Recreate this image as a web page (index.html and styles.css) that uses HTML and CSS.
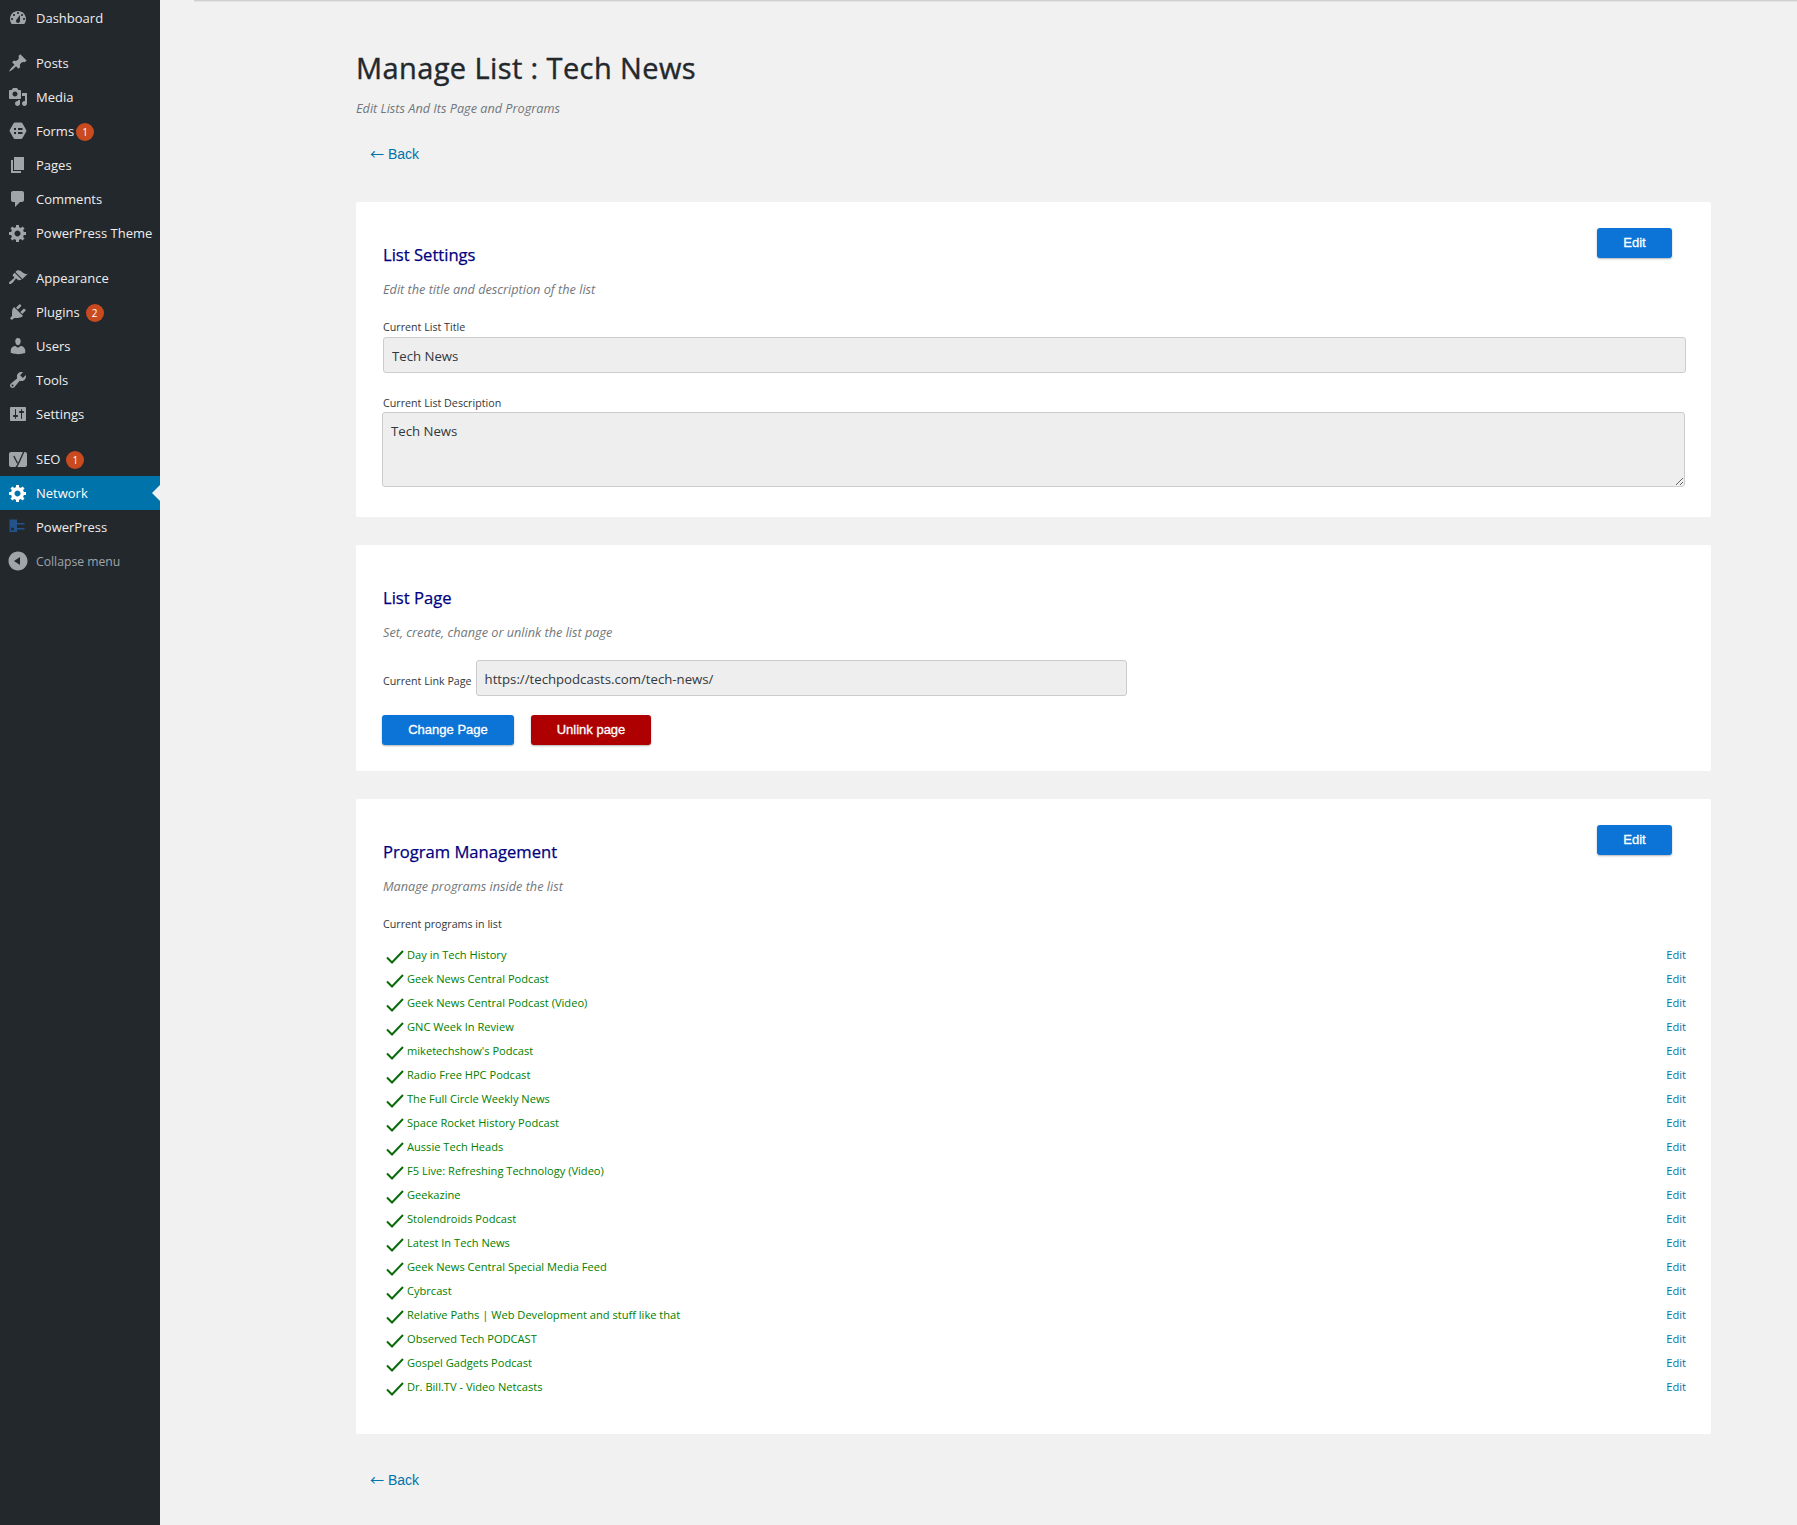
FILE: index.html
```html
<!DOCTYPE html>
<html lang="en">
<head>
    <meta charset="UTF-8">
    <title>Manage List : Tech News</title>
    <link rel="stylesheet" href="styles.css">
</head>
<body>
    <aside class="sidebar">
        <ul class="menu">
            <li class="menu-item"><svg class="menu-icon" viewBox="0 0 20 20"><path d="M3.76 16h12.48c1.1-1.37 1.76-3.11 1.76-5 0-4.42-3.58-8-8-8s-8 3.58-8 8c0 1.89.66 3.63 1.76 5zM10 4c.55 0 1 .45 1 1s-.45 1-1 1-1-.45-1-1 .45-1 1-1zM6 6c.55 0 1 .45 1 1s-.45 1-1 1-1-.45-1-1 .45-1 1-1zm8 0c.55 0 1 .45 1 1s-.45 1-1 1-1-.45-1-1 .45-1 1-1zm-5.37 5.55L12 7v6c0 1.1-.9 2-2 2s-2-.9-2-2c0-.57.24-1.08.63-1.45zM4 10c.55 0 1 .45 1 1s-.45 1-1 1-1-.45-1-1 .45-1 1-1zm12 0c.55 0 1 .45 1 1s-.45 1-1 1-1-.45-1-1 .45-1 1-1z"/></svg>Dashboard</li>
        </ul>
        <ul class="menu">
            <li class="menu-item"><svg class="menu-icon" viewBox="0 0 20 20"><path d="M10.44 3.02l1.82-1.82 6.36 6.35-1.83 1.82c-1.05-.68-2.48-.57-3.41.36l-.75.75c-.92.93-1.04 2.35-.35 3.41l-1.83 1.82-2.41-2.41-2.8 2.79c-.42.42-3.38 2.71-3.8 2.29s1.86-3.39 2.28-3.81l2.79-2.79L4.1 9.36l1.83-1.82c1.05.69 2.48.57 3.4-.36l.75-.75c.93-.92 1.05-2.35.36-3.41z"/></svg>Posts</li>
            <li class="menu-item"><svg class="menu-icon" viewBox="0 0 20 20"><path d="M13 11V4c0-.55-.45-1-1-1h-1.67L9 1H5L3.67 3H2c-.55 0-1 .45-1 1v7c0 .55.45 1 1 1h10c.55 0 1-.45 1-1zM7 4.5c1.38 0 2.5 1.12 2.5 2.5S8.38 9.5 7 9.5 4.5 8.38 4.5 7 5.62 4.5 7 4.5zM14 6h5v10.5c0 1.38-1.12 2.5-2.5 2.5S14 17.88 14 16.5s1.12-2.5 2.5-2.5c.17 0 .34.02.5.05V9h-3V6zm-4 8.05V13h2v3.5c0 1.38-1.12 2.5-2.5 2.5S7 17.88 7 16.5 8.12 14 9.5 14c.17 0 .34.02.5.05z"/></svg>Media</li>
            <li class="menu-item"><svg class="menu-icon" viewBox="0 0 20 20"><path fill-rule="evenodd" d="M7 1.500h6c.6 0 1.100.3 1.400.8l3.800 6.700c.3.5.3 1.100 0 1.600l-3.800 6.600c-.3.5-.8.8-1.400.8H7c-.6 0-1.100-.3-1.400-.8l-3.800-6.600c-.3-.5-.3-1.100 0-1.600l3.800-6.700c.3-.5.8-.8 1.400-.8zM6 7v2h2V7zm4 0v2h4.500V7zm-4 4v2h2v-2zm4 0v2h4.500v-2z"/></svg>Forms<span class="badge badge-tight">1</span></li>
            <li class="menu-item"><svg class="menu-icon" viewBox="0 0 20 20"><path d="M6 15V2h10v13H6zm-1 1h8v2H3V5h2v11z"/></svg>Pages</li>
            <li class="menu-item"><svg class="menu-icon" viewBox="0 0 20 20"><path d="M5 2h9c1.100 0 2 .9 2 2v7c0 1.100-.9 2-2 2h-2l-5 5v-5H5c-1.100 0-2-.9-2-2V4c0-1.100.9-2 2-2z"/></svg>Comments</li>
            <li class="menu-item"><svg class="menu-icon" viewBox="0 0 20 20"><path d="M18 12h-2.180c-.17.7-.44 1.350-.81 1.930l1.540 1.540-2.100 2.100-1.540-1.540c-.58.36-1.230.63-1.910.79V19H8v-2.180c-.68-.16-1.330-.43-1.910-.79l-1.540 1.540-2.120-2.120 1.540-1.540c-.36-.58-.63-1.230-.79-1.910H1V9.030h2.170c.16-.7.44-1.350.8-1.940L2.430 5.550l2.100-2.100 1.540 1.540c.58-.37 1.240-.64 1.930-.81V2h3v2.180c.68.16 1.330.43 1.910.79l1.540-1.540 2.120 2.120-1.540 1.540c.36.59.64 1.240.8 1.940H18V12zm-8.500 1.500c1.660 0 3-1.340 3-3s-1.340-3-3-3-3 1.340-3 3 1.340 3 3 3z"/></svg>PowerPress Theme</li>
        </ul>
        <ul class="menu">
            <li class="menu-item"><svg class="menu-icon" viewBox="0 0 20 20"><path d="M14.480 11.060L7.410 3.990l1.500-1.500c.5-.56 2.300-.47 3.510.32 1.210.8 1.430 1.280 2.910 2.100 1.180.64 2.450 1.260 4.450.85zm-.71.71L6.700 4.700 4.930 6.470c-.39.39-.39 1.020 0 1.410l1.060 1.060c.39.39.39 1.030 0 1.420-.6.6-1.430 1.110-2.210 1.690-.35.26-.7.53-1.010.84C1.430 13.230.4 14.890 1.200 15.700l.01.01c.8.8 2.460-.23 3.810-1.570.31-.31.58-.66.84-1.010.58-.78 1.090-1.610 1.690-2.210.39-.39 1.020-.39 1.420 0l1.060 1.060c.39.39 1.020.39 1.410 0z"/></svg>Appearance</li>
            <li class="menu-item"><svg class="menu-icon" viewBox="0 0 20 20"><path d="M13.110 4.360L9.870 7.600 8 5.730l3.240-3.240c.35-.34 1.050-.2 1.560.32.52.51.66 1.210.31 1.550zm-8 1.770l.91-1.120 9.010 9.010-1.190.84c-.71.71-2.630 1.160-3.820 1.160H6.140L4.900 17.260c-.59.59-1.540.59-2.120 0-.59-.58-.59-1.530 0-2.120l1.240-1.240v-3.880c0-1.130.4-3.190 1.090-3.890zm7.260 3.970l3.240-3.240c.34-.35 1.040-.21 1.550.31.52.51.66 1.210.31 1.550l-3.240 3.250z"/></svg>Plugins<span class="badge">2</span></li>
            <li class="menu-item"><svg class="menu-icon" viewBox="0 0 20 20"><path d="M10 9.250c-2.270 0-2.730-3.440-2.730-3.440C7 4.020 7.820 2 9.970 2c2.160 0 2.980 2.020 2.710 3.810 0 0-.41 3.440-2.680 3.440zm0 2.570L12.720 10c2.390 0 4.520 2.330 4.520 4.530v2.490s-3.650 1.130-7.240 1.130c-3.650 0-7.240-1.130-7.240-1.130v-2.490c0-2.250 1.940-4.480 4.470-4.480z"/></svg>Users</li>
            <li class="menu-item"><svg class="menu-icon" viewBox="0 0 20 20"><path d="M16.680 9.770c-1.340 1.340-3.300 1.670-4.950.99l-5.410 6.520c-.99.99-2.590.99-3.580 0s-.99-2.590 0-3.570l6.520-5.420c-.68-1.650-.35-3.610.99-4.950 1.280-1.280 3.120-1.620 4.720-1.060l-2.890 2.890 2.820 2.820 2.860-2.870c.53 1.580.18 3.390-1.080 4.650zM3.810 16.210c.4.39 1.040.39 1.430 0 .4-.4.4-1.040 0-1.430-.39-.4-1.030-.4-1.430 0-.39.39-.39 1.030 0 1.430z"/></svg>Tools</li>
            <li class="menu-item"><svg class="menu-icon" viewBox="0 0 20 20"><path d="M18 16V4c0-.55-.45-1-1-1H3c-.55 0-1 .45-1 1v12c0 .55.45 1 1 1h14c.55 0 1-.45 1-1zM8 11h1c.55 0 1 .45 1 1s-.45 1-1 1H8v1.500c0 .28-.22.5-.5.5s-.5-.22-.5-.5V13H6c-.55 0-1-.45-1-1s.45-1 1-1h1V5.500c0-.28.22-.5.5-.5s.5.22.5.5V11zm5-2h-1c-.55 0-1-.45-1-1s.45-1 1-1h1V5.500c0-.28.22-.5.5-.5s.5.22.5.5V7h1c.55 0 1 .45 1 1s-.45 1-1 1h-1v5.500c0 .28-.22.5-.5.5s-.5-.22-.5-.5V9z"/></svg>Settings</li>
        </ul>
        <ul class="menu">
            <li class="menu-item"><svg class="menu-icon" viewBox="0 0 20 20"><path d="M3 3h14c1.100 0 2 .9 2 2v11c0 1.100-.9 2-2 2H3c-1.100 0-2-.9-2-2V5c0-1.100.9-2 2-2z"/><path class="yoast-y" d="M17 0L10 15.500c-.8 1.900-2.300 3.500-4.500 4M5.800 7l3.700 7.200"/></svg>SEO<span class="badge">1</span></li>
            <li class="menu-item is-current"><svg class="menu-icon" viewBox="0 0 20 20"><path d="M18 12h-2.180c-.17.7-.44 1.350-.81 1.930l1.540 1.540-2.100 2.100-1.540-1.540c-.58.36-1.230.63-1.910.79V19H8v-2.180c-.68-.16-1.330-.43-1.910-.79l-1.540 1.540-2.120-2.120 1.540-1.540c-.36-.58-.63-1.230-.79-1.910H1V9.030h2.170c.16-.7.44-1.350.8-1.940L2.430 5.550l2.100-2.100 1.540 1.540c.58-.37 1.240-.64 1.930-.81V2h3v2.180c.68.16 1.330.43 1.910.79l1.540-1.540 2.120 2.120-1.540 1.540c.36.59.64 1.240.8 1.940H18V12zm-8.500 1.500c1.660 0 3-1.340 3-3s-1.340-3-3-3-3 1.340-3 3 1.340 3 3 3z"/></svg>Network</li>
            <li class="menu-item"><svg class="menu-icon icon-blue" viewBox="0 0 20 20"><path fill-rule="evenodd" d="M1.500 2.500h7.500v3.500h7.500v1.500H9v3.500h7.500v1.500H9v2.500H1.500zM4.500 10.500a1.500 1.500 0 1 0 0 3 1.500 1.500 0 0 0 0-3z"/></svg>PowerPress</li>
            <li class="menu-item is-collapse"><svg class="menu-icon" viewBox="0 0 20 20"><path d="M10 .5c5.250 0 9.500 4.250 9.500 9.500s-4.250 9.500-9.500 9.500S.5 15.250.5 10 4.750.5 10 .5zM12 14V6l-6 4z"/></svg>Collapse menu</li>
        </ul>
    </aside>

    <main class="content">
        <div class="top-line"></div>
        <div class="wrap">
            <h1 class="page-title">Manage List : Tech News</h1>
            <p class="note page-note">Edit Lists And Its Page and Programs</p>
            <a class="back" href="#"><span class="arrow">&larr;</span> Back</a>

            <section class="card">
                <a class="btn btn-edit" href="#">Edit</a>
                <h2 class="card-title">List Settings</h2>
                <p class="note">Edit the title and description of the list</p>
                <label class="field-label">Current List Title</label>
                <input class="field" type="text" value="Tech News" readonly>
                <label class="field-label label-gap">Current List Description</label>
                <textarea class="field field-area" readonly>Tech News</textarea>
            </section>

            <section class="card card-page">
                <h2 class="card-title">List Page</h2>
                <p class="note">Set, create, change or unlink the list page</p>
                <div class="link-row">
                    <label class="field-label">Current Link Page</label>
                    <input class="field field-link" type="text" value="https://techpodcasts.com/tech-news/" readonly>
                </div>
                <div class="btn-row">
                    <a class="btn btn-change" href="#">Change Page</a>
                    <a class="btn btn-red" href="#">Unlink page</a>
                </div>
            </section>

            <section class="card card-programs">
                <a class="btn btn-edit" href="#">Edit</a>
                <h2 class="card-title">Program Management</h2>
                <p class="note">Manage programs inside the list</p>
                <p class="field-label list-label">Current programs in list</p>
                <ul class="programs">
                    <li><svg class="check" viewBox="0 0 18 14"><path d="M1 7.500L6 12.500 17 1"/></svg><span class="program-name">Day in Tech History</span><a href="#">Edit</a></li>
                    <li><svg class="check" viewBox="0 0 18 14"><path d="M1 7.500L6 12.500 17 1"/></svg><span class="program-name">Geek News Central Podcast</span><a href="#">Edit</a></li>
                    <li><svg class="check" viewBox="0 0 18 14"><path d="M1 7.500L6 12.500 17 1"/></svg><span class="program-name">Geek News Central Podcast (Video)</span><a href="#">Edit</a></li>
                    <li><svg class="check" viewBox="0 0 18 14"><path d="M1 7.500L6 12.500 17 1"/></svg><span class="program-name">GNC Week In Review</span><a href="#">Edit</a></li>
                    <li><svg class="check" viewBox="0 0 18 14"><path d="M1 7.500L6 12.500 17 1"/></svg><span class="program-name">miketechshow's Podcast</span><a href="#">Edit</a></li>
                    <li><svg class="check" viewBox="0 0 18 14"><path d="M1 7.500L6 12.500 17 1"/></svg><span class="program-name">Radio Free HPC Podcast</span><a href="#">Edit</a></li>
                    <li><svg class="check" viewBox="0 0 18 14"><path d="M1 7.500L6 12.500 17 1"/></svg><span class="program-name">The Full Circle Weekly News</span><a href="#">Edit</a></li>
                    <li><svg class="check" viewBox="0 0 18 14"><path d="M1 7.500L6 12.500 17 1"/></svg><span class="program-name">Space Rocket History Podcast</span><a href="#">Edit</a></li>
                    <li><svg class="check" viewBox="0 0 18 14"><path d="M1 7.500L6 12.500 17 1"/></svg><span class="program-name">Aussie Tech Heads</span><a href="#">Edit</a></li>
                    <li><svg class="check" viewBox="0 0 18 14"><path d="M1 7.500L6 12.500 17 1"/></svg><span class="program-name">F5 Live: Refreshing Technology (Video)</span><a href="#">Edit</a></li>
                    <li><svg class="check" viewBox="0 0 18 14"><path d="M1 7.500L6 12.500 17 1"/></svg><span class="program-name">Geekazine</span><a href="#">Edit</a></li>
                    <li><svg class="check" viewBox="0 0 18 14"><path d="M1 7.500L6 12.500 17 1"/></svg><span class="program-name">Stolendroids Podcast</span><a href="#">Edit</a></li>
                    <li><svg class="check" viewBox="0 0 18 14"><path d="M1 7.500L6 12.500 17 1"/></svg><span class="program-name">Latest In Tech News</span><a href="#">Edit</a></li>
                    <li><svg class="check" viewBox="0 0 18 14"><path d="M1 7.500L6 12.500 17 1"/></svg><span class="program-name">Geek News Central Special Media Feed</span><a href="#">Edit</a></li>
                    <li><svg class="check" viewBox="0 0 18 14"><path d="M1 7.500L6 12.500 17 1"/></svg><span class="program-name">Cybrcast</span><a href="#">Edit</a></li>
                    <li><svg class="check" viewBox="0 0 18 14"><path d="M1 7.500L6 12.500 17 1"/></svg><span class="program-name">Relative Paths | Web Development and stuff like that</span><a href="#">Edit</a></li>
                    <li><svg class="check" viewBox="0 0 18 14"><path d="M1 7.500L6 12.500 17 1"/></svg><span class="program-name">Observed Tech PODCAST</span><a href="#">Edit</a></li>
                    <li><svg class="check" viewBox="0 0 18 14"><path d="M1 7.500L6 12.500 17 1"/></svg><span class="program-name">Gospel Gadgets Podcast</span><a href="#">Edit</a></li>
                    <li><svg class="check" viewBox="0 0 18 14"><path d="M1 7.500L6 12.500 17 1"/></svg><span class="program-name">Dr. Bill.TV - Video Netcasts</span><a href="#">Edit</a></li>
                </ul>
            </section>

            <a class="back back-bottom" href="#"><span class="arrow">&larr;</span> Back</a>
        </div>
    </main>
</body>
</html>
```

FILE: styles.css
```css
/* Page frame */
html, body {
  margin: 0;
  padding: 0;
}

body {
  display: flex;
  height: 1525px;
  overflow: hidden;
  background-color: #f1f1f1;
  font-family: "Open Sans", "Liberation Sans", sans-serif;
  color: #23282d;
}

/* Admin sidebar */
.sidebar {
  width: 160px;
  flex-shrink: 0;
  background-color: #23282d;
  padding-top: 1px;
  box-sizing: border-box;
}

.menu {
  list-style: none;
  margin: 0 0 11px;
  padding: 0;
}

.menu-item {
  position: relative;
  display: flex;
  align-items: center;
  height: 34px;
  font-size: 13px;
  color: #eee;
  white-space: nowrap;
}

.menu-icon {
  width: 20px;
  height: 20px;
  margin: 0 8px 0 8px;
  flex-shrink: 0;
  fill: #a0a5aa;
  overflow: visible;
}

.icon-blue {
  fill: #23538a;
}

.yoast-y {
  fill: none;
  stroke: #23282d;
  stroke-width: 1.3;
}

.is-current {
  background-color: #0073aa;
  color: #fff;
}

.is-current .menu-icon {
  fill: #fff;
}

/* little notch pointing at the content */
.is-current::after {
  content: "";
  position: absolute;
  right: 0;
  top: 9px;
  border: 8px solid transparent;
  border-left-width: 0;
  border-right-color: #f1f1f1;
}

.is-collapse {
  font-size: 12.2px;
  color: #a0a5aa;
}

.badge {
  display: inline-block;
  width: 18px;
  height: 18px;
  margin: 1px 0 0 6px;
  border-radius: 50%;
  background-color: #ca4a1f;
  color: #fff;
  font-size: 10px;
  line-height: 18px;
  text-align: center;
}

.badge-tight {
  margin-left: 2px;
}

/* Main column */
.content {
  flex: 1;
  min-width: 0;
}

.top-line {
  height: 1px;
  margin-left: 34px;
  background-color: #d0d0d0;
  box-shadow: 0 1px 0 #e4e4e4;
}

.wrap {
  width: 1355px;
  margin-left: 196px;
}

.page-title {
  margin: 47px 0 0;
  font-size: 29px;
  line-height: 40px;
  font-weight: 400;
  letter-spacing: .4px;
  -webkit-text-stroke: .4px #23282d;
}

.note {
  margin: 0;
  font-size: 12.700px;
  line-height: 16px;
  font-style: italic;
  color: #72777c;
}

.page-note {
  margin-top: 12px;
}

.back {
  display: block;
  margin: 28px 0 0 14px;
  font-family: "Liberation Sans", sans-serif;
  font-size: 14px;
  line-height: 20px;
  color: #0073aa;
  text-decoration: none;
}

.arrow {
  display: inline-block;
  width: 14px;
  font-family: "Noto Sans CJK SC", sans-serif;
  font-size: 14px;
  line-height: 14px;
}

/* Cards */
.card {
  position: relative;
  height: 315px;
  margin-top: 38px;
  padding: 42px 25px 0 27px;
  box-sizing: border-box;
  background-color: #fff;
  border-radius: 2px;
}

.card-page {
  height: 226px;
  margin-top: 28px;
}

.card-programs {
  height: 635px;
  margin-top: 28px;
}

.card-title {
  margin: 0;
  font-size: 16.600px;
  line-height: 22px;
  font-weight: 400;
  color: #000080;
  -webkit-text-stroke: .25px #000080;
}

.card .note {
  margin-top: 15px;
}

.btn {
  display: inline-block;
  height: 30px;
  box-sizing: border-box;
  border-radius: 3px;
  background-color: #0c74d6;
  box-shadow: 0 1px 2px rgba(0, 0, 0, .3);
  color: #fff;
  font-family: "Liberation Sans", sans-serif;
  font-size: 13px;
  line-height: 30px;
  text-align: center;
  text-decoration: none;
  -webkit-text-stroke: .3px #fff;
}

.btn-edit {
  position: absolute;
  top: 26px;
  right: 39px;
  width: 75px;
}

.btn-change {
  width: 132px;
}

.btn-red {
  width: 120px;
  background-color: #ae0000;
}

.field-label {
  display: block;
  font-size: 10.700px;
  line-height: 14px;
  color: #32373c;
}

.card .field-label {
  margin-top: 23px;
}

.card .label-gap {
  margin-top: 23px;
}

.field {
  display: block;
  width: 100%;
  height: 36px;
  margin: 3px 0 0;
  padding: 1px 8px 0;
  box-sizing: border-box;
  background-color: #eee;
  border: 1px solid #ccc;
  border-radius: 3px;
  font-family: "Open Sans", sans-serif;
  font-size: 13.200px;
  color: #32373c;
  outline: none;
}

.field-area {
  height: 75px;
  padding-top: 9px;
  margin: 2px 0 0 -1px;
  line-height: 18px;
  resize: vertical;
}

/* List page row */
.link-row {
  display: flex;
  align-items: center;
  gap: 4px;
  margin-top: 20px;
}

.link-row .field-label {
  margin-top: 5px;
}

.field-link {
  width: 651px;
  margin: 0;
  padding-top: 2px;
}

.btn-row {
  display: flex;
  gap: 17px;
  margin: 19px 0 0 -1px;
}

/* Program list */
.card .list-label {
  margin-top: 23px;
}

.programs {
  list-style: none;
  margin: 11px 0 0;
  padding: 0;
}

.programs li {
  display: flex;
  align-items: center;
  height: 24px;
  font-size: 11.100px;
}

.check {
  width: 18px;
  height: 14px;
  margin: 6px 3px 0 3px;
  flex-shrink: 0;
  fill: none;
  stroke: #0b6b0b;
  stroke-width: 2;
}

.program-name {
  flex: 1;
  color: #008000;
}

.programs a {
  color: #0073aa;
  text-decoration: none;
}

.back-bottom {
  margin-top: 36px;
}
```
